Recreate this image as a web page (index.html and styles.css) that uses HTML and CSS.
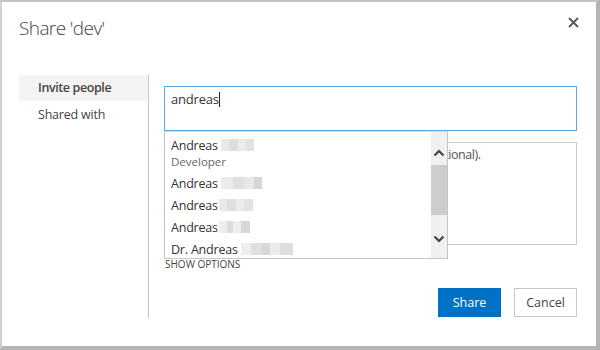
FILE: index.html
```html
<!DOCTYPE html>
<html>
<head>
<meta charset="utf-8">
<link rel="stylesheet" href="styles.css">
</head>
<body>
<div class="dialog">
  <div class="header">
    <h1 class="title">Share 'dev'</h1>
    <svg class="close" width="11" height="11" viewBox="0 0 11 11"><path d="M1 1 L10 10 M10 1 L1 10" stroke="#555" stroke-width="1.8" fill="none"/></svg>
  </div>
  <div class="body">
    <div class="nav">
      <div class="nav-item active">Invite people</div>
      <div class="nav-item">Shared with</div>
    </div>
    <div class="content">
      <div class="input">andreas<span class="caret"></span></div>
      <div class="message">Include a personal message with this invitation (Optional).</div>
      <div class="options">SHOW OPTIONS</div>
      <div class="buttons">
        <div class="btn primary">Share</div>
        <div class="btn">Cancel</div>
      </div>
      <div class="dropdown">
        <div class="list">
          <div class="item first"><div class="name">Andreas <span class="blur b1"></span></div><div class="sub">Developer</div></div>
          <div class="item"><div class="name">Andreas <span class="blur b2"></span></div></div>
          <div class="item"><div class="name">Andreas<span class="blur b3"></span></div></div>
          <div class="item"><div class="name">Andreas<span class="blur b4"></span></div></div>
          <div class="item"><div class="name">Dr. Andreas<span class="blur b5"></span></div></div>
        </div>
        <div class="scrollbar">
          <svg class="arrow" width="12" height="8" viewBox="0 0 12 8"><path d="M1.5 6.5 L6 2 L10.5 6.5" stroke="#444" stroke-width="2.2" fill="none"/></svg>
          <div class="thumb"></div>
          <div class="track"></div>
          <svg class="arrow" width="12" height="8" viewBox="0 0 12 8"><path d="M1.5 1.5 L6 6 L10.5 1.5" stroke="#444" stroke-width="2.2" fill="none"/></svg>
        </div>
      </div>
    </div>
  </div>
</div>
</body>
</html>
```

FILE: styles.css
```css
* { box-sizing: border-box; }
html, body { margin: 0; padding: 0; }
body {
  width: 600px;
  height: 350px;
  background: #fff;
  font-family: "Open Sans", "Noto Sans", sans-serif;
  color: #444;
  overflow: hidden;
}
.dialog {
  width: 600px;
  height: 350px;
  border-top: 2px solid #c4c4c4;
  border-left: 2px solid #d0d0d0;
  border-right: 4px solid #b4b4b4;
  border-bottom: 4px solid #b4b4b4;
  padding: 0 19px 0 17px;
  display: flex;
  flex-direction: column;
}
.header {
  display: flex;
  justify-content: space-between;
  align-items: flex-start;
  height: 73px;
}
.title {
  margin: 13px 0 0 0;
  font-size: 19px;
  font-weight: 300;
  letter-spacing: -0.6px;
  color: #444;
  line-height: 26px;
}
.close {
  margin-top: 15px;
  margin-right: -2px;
}
.body {
  display: flex;
  flex: 0 0 auto;
}
.nav {
  width: 130px;
  height: 243px;
  border-right: 1px solid #c6c6c6;
}
.nav-item {
  height: 26px;
  line-height: 26px;
  padding-left: 19px;
  font-size: 12.5px;
  letter-spacing: -0.2px;
  color: #444;
}
.nav-item + .nav-item {
  line-height: 27px;
}
.nav-item.active {
  background: #f4f4f4;
  font-weight: 600;
  letter-spacing: -0.4px;
}
.content {
  position: relative;
  flex: 1;
  padding-left: 15px;
  padding-top: 11px;
}
.input {
  height: 45px;
  border: 1px solid #5aa7ea;
  padding: 2px 6px;
  font-size: 13px;
  line-height: 20px;
  letter-spacing: -0.2px;
  color: #333;
}
.caret {
  display: inline-block;
  width: 1px;
  height: 15px;
  background: #222;
  vertical-align: -3px;
}
.message {
  margin-top: 11px;
  height: 103px;
  border: 1px solid #c8c8c8;
  padding: 2px 6px;
  font-size: 12.5px;
  line-height: 20px;
  letter-spacing: -0.45px;
  white-space: nowrap;
  overflow: hidden;
  color: #555;
}
.options {
  margin-top: 12px;
  padding-left: 1px;
  font-size: 10px;
  line-height: 14px;
  color: #444;
}
.buttons {
  display: flex;
  justify-content: flex-end;
  gap: 13px;
  margin-top: 17px;
}
.btn {
  width: 63px;
  height: 29px;
  border: 1px solid #c6c6c6;
  background: #fff;
  font-size: 12.5px;
  line-height: 27px;
  text-align: center;
  color: #444;
}
.btn.primary {
  background: #0072c6;
  border-color: #0072c6;
  color: #fff;
}
.dropdown {
  position: absolute;
  left: 15px;
  top: 56px;
  width: 284px;
  height: 128px;
  border: 1px solid #c6c6c6;
  border-top-color: #d8d8d8;
  background: #fff;
  display: flex;
  overflow: hidden;
}
.list {
  flex: 1;
  padding-left: 6px;
}
.item {
  height: 22px;
  padding-top: 3px;
}
.item.first {
  height: 40px;
  padding-top: 5px;
}
.name {
  font-size: 12.5px;
  line-height: 17px;
  letter-spacing: -0.2px;
  color: #333;
}
.sub {
  font-size: 11.5px;
  line-height: 16px;
  color: #666;
}
.blur {
  display: inline-block;
  height: 12px;
  vertical-align: -1px;
  background: linear-gradient(90deg, #e9e9e9 0 25%, #dedede 25% 50%, #ebebeb 50% 75%, #e2e2e2 75%);
}
.b1 { width: 33px; }
.b2 { width: 41px; background: linear-gradient(90deg, #ececec 0 30%, #e0e0e0 30% 55%, #e8e8e8 55% 80%, #d6d6d6 80%); }
.b3 { width: 34px; margin-left: 1px; }
.b4 { width: 31px; margin-left: 1px; background: linear-gradient(90deg, #ededed 0 25%, #dcdcdc 25% 45%, #eeeeee 45% 70%, #d8d8d8 70%); }
.b5 { width: 52px; margin-left: 3px; background: linear-gradient(90deg, #eeeeee 0 20%, #e0e0e0 20% 40%, #d8d8d8 40% 55%, #ebebeb 55% 75%, #dedede 75%); }
.scrollbar {
  width: 16px;
  background: #f0f0f0;
  display: flex;
  flex-direction: column;
  align-items: center;
}
.arrow {
  flex: 0 0 auto;
  margin: 17px 0 8px;
}
.scrollbar .arrow:last-child {
  margin: 0 0 15px;
}
.thumb {
  width: 16px;
  height: 50px;
  background: #cdcdcd;
}
.track {
  flex: 1;
}
```
